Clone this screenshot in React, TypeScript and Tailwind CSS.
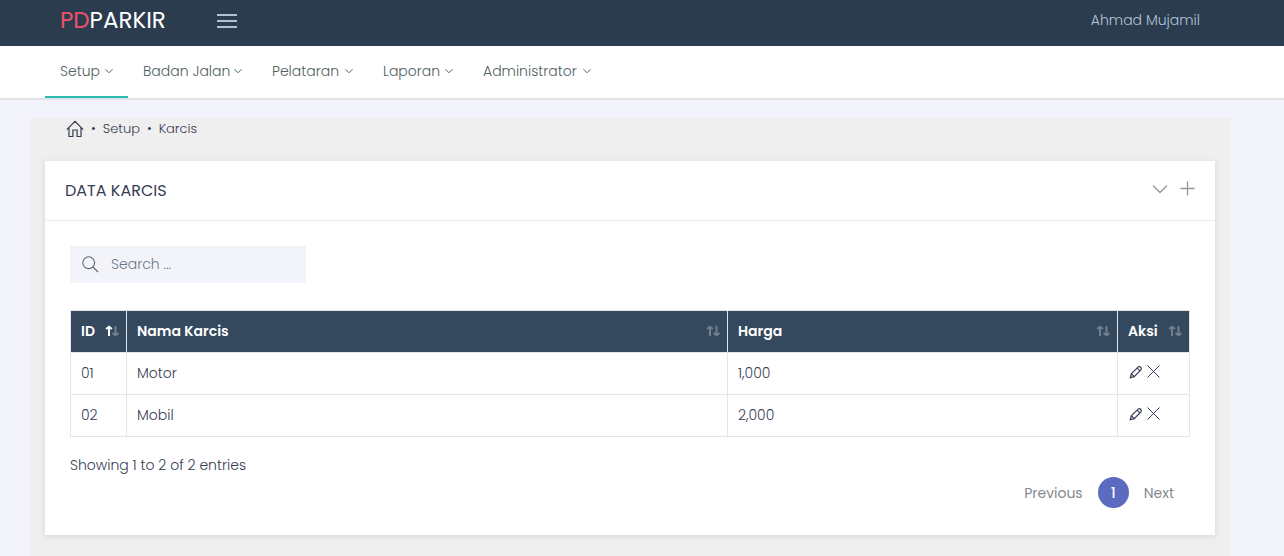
import React from "react";

type Column = { label: string; width: string; sorted?: boolean };
type Ticket = { id: string; name: string; price: string };

const menus = [
  { label: "Setup", width: "w-[83px]" },
  { label: "Badan Jalan", width: "w-[129px]" },
  { label: "Pelataran", width: "w-[111px]" },
  { label: "Laporan", width: "w-[100px]" },
  { label: "Administrator", width: "w-[138px]" },
];

const columns: Column[] = [
  { label: "ID", width: "w-14", sorted: true },
  { label: "Nama Karcis", width: "" },
  { label: "Harga", width: "w-[390px]" },
  { label: "Aksi", width: "w-[72px]" },
];

const tickets: Ticket[] = [
  { id: "01", name: "Motor", price: "1,000" },
  { id: "02", name: "Mobil", price: "2,000" },
];

function Chevron({ className }: { className: string }) {
  return (
    <svg viewBox="0 0 16 16" className={className} fill="none" stroke="currentColor" aria-hidden="true">
      <path d="M1 4.5 8 11.5 15 4.5" />
    </svg>
  );
}

function HomeIcon() {
  return (
    <svg viewBox="0 0 18 18" className="size-[18px]" fill="none" stroke="currentColor" strokeWidth="1.2" aria-hidden="true">
      <path d="M.8 9.6 9 1.4l8.2 8.2M3 7.8v8.7h3.9V10h4.2v6.5H15V7.8" />
    </svg>
  );
}

function SearchIcon() {
  return (
    <svg viewBox="0 0 17 17" className="size-[17px] shrink-0" fill="none" stroke="currentColor" strokeWidth="1.1" aria-hidden="true">
      <circle cx="6.7" cy="6.7" r="5.9" />
      <path d="m11 11 5 5" />
    </svg>
  );
}

function PlusIcon() {
  return (
    <svg viewBox="0 0 15 15" className="size-[15px]" fill="none" stroke="currentColor" strokeWidth="1.3" aria-hidden="true">
      <path d="M7.5.5v14M.5 7.5h14" />
    </svg>
  );
}

function PencilIcon() {
  return (
    <svg viewBox="0 0 14 14" className="size-3.5" fill="none" stroke="currentColor" strokeWidth="1.2" aria-hidden="true">
      <path d="m1.3 12.7 1-4 6.8-6.6q1.3-1.1 2.6.1t.2 2.6L5.2 11.6zM2.3 8.7l2.9 2.9M8.2 3.1l2.7 2.7" />
    </svg>
  );
}

function CloseIcon() {
  return (
    <svg viewBox="0 0 13 13" className="size-[13px]" fill="none" stroke="currentColor" aria-hidden="true">
      <path d="m.5.5 12 12m0-12-12 12" />
    </svg>
  );
}

function SortIcon({ sorted }: { sorted?: boolean }) {
  return (
    <svg viewBox="0 0 14 12" className="h-3 w-3.5" fill="none" stroke="#fff" strokeWidth="2" aria-hidden="true">
      <path d="M4 11V2M1 4l3-2.3L7 4" opacity={sorted ? 1 : 0.3} />
      <path d="M10.5 1v9M7.5 8l3 2.3 3-2.3" opacity="0.3" />
    </svg>
  );
}

export default function App() {
  return (
    <div className="flex min-h-screen flex-col bg-[#f2f3fb] font-[Poppins,Inter,sans-serif] text-sm font-light text-[#353c53]">
      <header className="bg-[#2c3c4f] pr-6">
        <div className="mx-auto flex h-[46px] max-w-[1200px] items-center px-[30px] pb-1">
          <a href="#" className="w-[157px] pb-0.5 text-[23px] leading-8 font-normal text-white">
            <span className="text-[#f0506a]">PD</span>PARKIR
          </a>
          <button type="button" aria-label="Toggle menu" className="flex flex-col gap-1">
            <span className="h-0.5 w-5 bg-[#b5bfcf]" />
            <span className="h-0.5 w-5 bg-[#b5bfcf]" />
            <span className="h-0.5 w-5 bg-[#b5bfcf]" />
          </button>
          <a href="#" className="ml-auto pb-0.5 text-[#b4c2da]">
            Ahmad Mujamil
          </a>
        </div>
      </header>

      <nav className="border-b-2 border-[#e0e2e7] bg-white pr-6">
        <ul className="mx-auto flex max-w-[1200px] px-[15px]">
          {menus.map(({ label, width }, index) => (
            <li key={label} className={width}>
              <button
                type="button"
                className={`flex h-[52px] w-full items-center justify-between border-b-2 px-[15px] whitespace-nowrap text-[#4f6062] ${
                  index === 0 ? "border-[#2bbbad]" : "border-transparent"
                }`}
              >
                {label}
                <Chevron className="size-2 stroke-2" />
              </button>
            </li>
          ))}
        </ul>
      </nav>

      <div className="flex flex-1 pt-[18px] pr-6">
        <main className="mx-auto w-full max-w-[1200px] bg-[#efefef] px-[15px] pb-5">
          <nav aria-label="Breadcrumb" className="flex h-[43px] items-start pt-px pl-[21px] text-[13px] leading-5">
            <ol className="flex items-center gap-[7px]">
              <li>
                <a href="#" aria-label="Home">
                  <HomeIcon />
                </a>
              </li>
              <li aria-hidden="true">•</li>
              <li>
                <a href="#">Setup</a>
              </li>
              <li aria-hidden="true">•</li>
              <li>
                <a href="#">Karcis</a>
              </li>
            </ol>
          </nav>

          <section className="bg-white shadow-[0_1px_5px_1px_rgba(69,65,78,0.1)]">
            <div className="flex h-[60px] items-center border-b border-[#e9eaee] px-5">
              <h1 className="text-base font-normal">DATA KARCIS</h1>
              <div className="ml-auto flex items-center gap-3 pb-1 text-[#92959d]">
                <button type="button" aria-label="Collapse">
                  <Chevron className="size-4 stroke-[1.3]" />
                </button>
                <button type="button" aria-label="Add">
                  <PlusIcon />
                </button>
              </div>
            </div>

            <div className="px-[25px] pt-[25px] pb-[27px]">
              <label className="flex h-[37px] w-[236px] items-center gap-3 bg-[#f3f4f9] px-3 text-[#5d6575]">
                <SearchIcon />
                <input
                  type="search"
                  aria-label="Search"
                  placeholder="Search ..."
                  className="w-full min-w-0 bg-transparent pb-0.5 outline-none placeholder:text-[#6b788a]"
                />
              </label>

              <table className="mt-[27px] w-full table-fixed border-collapse">
                <thead>
                  <tr className="h-[42px] text-left text-white">
                    {columns.map(({ label, width, sorted }) => (
                      <th
                        key={label}
                        className={`border border-[#e3e5ea] bg-[#34495e] bg-clip-padding p-0 pb-0.5 font-semibold ${width}`}
                      >
                        <button type="button" className="flex w-full items-center justify-between pr-[7px] pl-2.5">
                          {label}
                          <SortIcon sorted={sorted} />
                        </button>
                      </th>
                    ))}
                  </tr>
                </thead>
                <tbody>
                  {tickets.map(({ id, name, price }) => (
                    <tr key={id} className="h-[42px]">
                      <td className="border border-[#e3e5ea] px-2.5 pb-0.5">{id}</td>
                      <td className="border border-[#e3e5ea] px-2.5 pb-0.5">{name}</td>
                      <td className="border border-[#e3e5ea] px-2.5 pb-0.5">{price}</td>
                      <td className="border border-[#e3e5ea] pr-2.5 pb-0.5 pl-[11px]">
                        <div className="flex items-center gap-1 pb-0.5">
                          <button type="button" aria-label={`Edit ${name}`}>
                            <PencilIcon />
                          </button>
                          <button type="button" aria-label={`Delete ${name}`}>
                            <CloseIcon />
                          </button>
                        </div>
                      </td>
                    </tr>
                  ))}
                </tbody>
              </table>

              <p className="mt-[18px] leading-5">Showing 1 to 2 of 2 entries</p>
              <div className="mt-0.5 flex items-center justify-end gap-[15px] pr-4 font-normal text-[#83898f]">
                <button type="button">Previous</button>
                <button type="button" aria-current="page" className="size-[31px] rounded-full bg-[#5c6bc0] font-medium text-white">
                  1
                </button>
                <button type="button">Next</button>
              </div>
            </div>
          </section>
        </main>
      </div>
    </div>
  );
}
